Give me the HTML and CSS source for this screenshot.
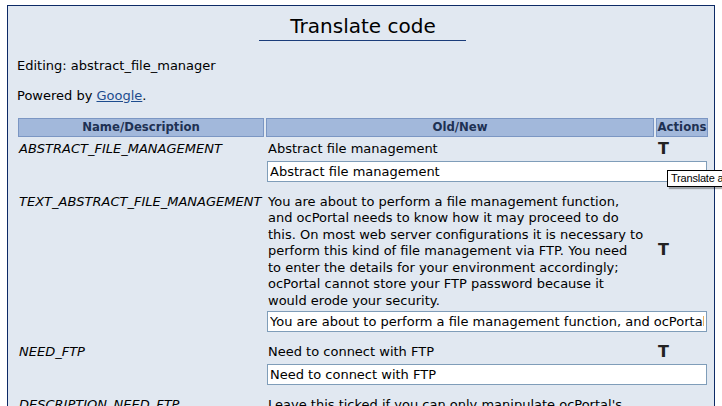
FILE: index.html
```html
<!DOCTYPE html>
<html>
<head>
<meta charset="utf-8">
<title>Translate code</title>
<link rel="stylesheet" href="styles.css">
</head>
<body>
<div class="frame">
  <div class="title-wrap"><h1 class="title">Translate code</h1></div>
  <p class="editing">Editing: abstract_file_manager</p>
  <p class="powered">Powered by <a href="#" class="link">Google</a>.</p>
  <table class="grid">
    <colgroup>
      <col class="c-name"><col class="c-old"><col class="c-act">
    </colgroup>
    <thead>
      <tr><th>Name/Description</th><th>Old/New</th><th>Actions</th></tr>
    </thead>
    <tbody>
      <tr class="old">
        <td class="name" rowspan="2">ABSTRACT_FILE_MANAGEMENT</td>
        <td class="oldtext">Abstract file management</td>
        <td class="act"><span class="t-icon">T</span></td>
      </tr>
      <tr class="new"><td colspan="2" class="inp"><input class="field" type="text" value="Abstract file management"></td></tr>

      <tr class="old">
        <td class="name" rowspan="2">TEXT_ABSTRACT_FILE_MANAGEMENT</td>
        <td class="oldtext">You are about to perform a file management function,<br>and ocPortal needs to know how it may proceed to do<br>this. On most web server configurations it is necessary to<br>perform this kind of file management via FTP. You need<br>to enter the details for your environment accordingly;<br>ocPortal cannot store your FTP password because it<br>would erode your security.</td>
        <td class="act"><span class="t-icon">T</span></td>
      </tr>
      <tr class="new"><td colspan="2" class="inp"><input class="field" type="text" value="You are about to perform a file management function, and ocPortal needs to know how it may proceed to do this."></td></tr>

      <tr class="old">
        <td class="name" rowspan="2">NEED_FTP</td>
        <td class="oldtext">Need to connect with FTP</td>
        <td class="act"><span class="t-icon">T</span></td>
      </tr>
      <tr class="new"><td colspan="2" class="inp"><input class="field" type="text" value="Need to connect with FTP"></td></tr>

      <tr class="old">
        <td class="name" rowspan="2">DESCRIPTION_NEED_FTP</td>
        <td class="oldtext">Leave this ticked if you can only manipulate ocPortal's<br>files using FTP.</td>
        <td class="act"><span class="t-icon">T</span></td>
      </tr>
      <tr class="new"><td colspan="2" class="inp"><input class="field" type="text" value="Leave this ticked if you can only manipulate ocPortal's files using FTP."></td></tr>
    </tbody>
  </table>
</div>
<div class="tooltip">Translate and edit this string</div>
</body>
</html>
```
FILE: styles.css
```css
html, body {
  margin: 0;
  padding: 0;
  background: #ffffff;
  overflow: hidden;
}
body {
  font-family: "DejaVu Sans", Verdana, sans-serif;
  font-size: 13px;
  line-height: 16.5px;
  color: #000;
  position: relative;
}
.frame {
  margin: 5px 7px 0 7px;
  border: 1px solid #0d2a66;
  background: #e1e8f1;
  padding: 0 5px 40px 8px;
}
.title-wrap {
  text-align: center;
  padding-top: 8px;
}
.title {
  display: inline-block;
  margin: 0;
  font-size: 20px;
  font-weight: normal;
  line-height: 24px;
  padding: 0 30px 2px 31px;
  border-bottom: 1px solid #1a3c7a;
}
.editing {
  margin: 16.5px 0 0 1px;
}
.powered {
  margin: 13.5px 0 0 1px;
}
.link {
  color: #1d4c8e;
  text-decoration: underline;
}
.grid {
  margin-top: 11.5px;
  border-spacing: 2px;
  width: 692px;
  table-layout: fixed;
}
.c-name { width: 246px; }
.c-old { width: 388px; }
.c-act { width: 52px; }
.grid th {
  background: #a2b8db;
  border: 1px solid #7b96c3;
  color: #1e3153;
  font-size: 11.7px;
  font-weight: bold;
  height: 17px;
  padding: 0;
  line-height: 16px;
}
.grid td {
  padding: 2px 2px 0 2px;
  vertical-align: top;
}
.name {
  font-style: italic;
  padding-left: 1px !important;
  white-space: nowrap;
}
.oldtext {
  padding-right: 0 !important;
  white-space: nowrap;
  overflow: hidden;
}
.act {
  vertical-align: middle !important;
}
.t-icon {
  display: inline-block;
  height: 18px;
  line-height: 16px;
  font-weight: bold;
  font-size: 16px;
  color: #222;
}
.inp {
  padding: 0 0 8px 1px !important;
}
.field {
  display: block;
  box-sizing: border-box;
  width: 440px;
  height: 21px;
  margin: 0;
  border: 1px solid #7f9db9;
  background: #fff;
  font-family: "DejaVu Sans", Verdana, sans-serif;
  font-size: 13px;
  padding: 0 2px;
  color: #000;
}
.tooltip {
  position: absolute;
  left: 667px;
  top: 170px;
  background: #fff;
  border: 1px solid #000;
  font-family: "Liberation Sans", Arial, sans-serif;
  font-size: 11px;
  letter-spacing: -0.2px;
  line-height: 15px;
  padding: 0 3px;
  white-space: nowrap;
  box-shadow: 2px 2px 1px rgba(0,0,0,0.3);
}
```
